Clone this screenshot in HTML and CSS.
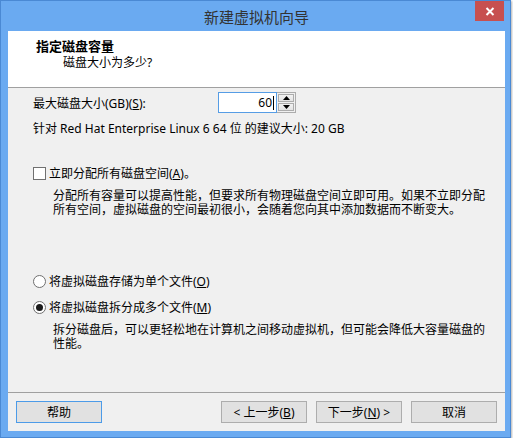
FILE: index.html
```html
<!DOCTYPE html>
<html lang="zh-CN">
<head>
    <meta charset="UTF-8">
    <title>新建虚拟机向导</title>
    <link rel="stylesheet" href="styles.css">
</head>
<body>
    <div class="window">
        <div class="titlebar">
            <span class="title">新建虚拟机向导</span>
            <button class="close" title="关闭">
                <svg width="10" height="9" viewBox="0 0 10 9">
                    <path d="M1.5 1 L8.5 8 M8.5 1 L1.5 8" stroke="#fff" stroke-width="2" fill="none"/>
                </svg>
            </button>
        </div>

        <div class="client">
            <div class="header">
                <div class="header-title">指定磁盘容量</div>
                <div class="header-sub">磁盘大小为多少?</div>
            </div>

            <div class="content">
                <div class="size-row">
                    <label>最大磁盘大小(GB)(<u>S</u>):</label>
                    <div class="spin">
                        <div class="spin-input">60<span class="caret"></span></div>
                        <div class="spin-buttons">
                            <span class="spin-btn">
                                <svg width="7" height="4" viewBox="0 0 7 4"><path d="M0 4 L3.5 0 L7 4 Z" fill="#000"/></svg>
                            </span>
                            <span class="spin-btn">
                                <svg width="7" height="4" viewBox="0 0 7 4"><path d="M0 0 L3.5 4 L7 0 Z" fill="#000"/></svg>
                            </span>
                        </div>
                    </div>
                </div>

                <p class="recommend">针对 Red Hat Enterprise Linux 6 64 位 的建议大小: 20 GB</p>

                <div class="option check-row">
                    <span class="checkbox"></span>立即分配所有磁盘空间(<u>A</u>)。
                </div>
                <p class="desc">分配所有容量可以提高性能，但要求所有物理磁盘空间立即可用。如果不立即分配所有空间，虚拟磁盘的空间最初很小，会随着您向其中添加数据而不断变大。</p>

                <div class="option radio-one">
                    <span class="radio"></span>将虚拟磁盘存储为单个文件(<u>O</u>)
                </div>
                <div class="option radio-two">
                    <span class="radio checked"></span>将虚拟磁盘拆分成多个文件(<u>M</u>)
                </div>
                <p class="desc">拆分磁盘后，可以更轻松地在计算机之间移动虚拟机，但可能会降低大容量磁盘的性能。</p>
            </div>

            <div class="footer">
                <button class="btn default">帮助</button>
                <div class="nav">
                    <button class="btn">&lt; 上一步(<u>B</u>)</button>
                    <button class="btn">下一步(<u>N</u>) &gt;</button>
                    <button class="btn">取消</button>
                </div>
            </div>
        </div>
    </div>
</body>
</html>
```

FILE: styles.css
```css
body {
    margin: 0;
    background: #fff;
    font-family: "Noto Sans", "Noto Sans CJK SC", sans-serif;
    font-size: 12px;
    color: #000;
}

.window {
    position: relative;
    width: 511px;
    height: 438px;
    box-sizing: border-box;
    display: flex;
    flex-direction: column;
    padding: 0 5px 6px 7px;
    background: #6aaaf1;
    border: 1px solid #4a89d4;
    box-shadow: 1px 1px 2px rgba(0, 0, 0, 0.3);
}

.titlebar {
    height: 30px;
    display: flex;
    align-items: center;
    justify-content: center;
}

.title {
    font-size: 15px;
    color: #333;
}

.close {
    position: absolute;
    top: 0;
    right: 6px;
    width: 29px;
    height: 20px;
    padding: 0;
    border: none;
    background: #c75050;
    display: flex;
    align-items: center;
    justify-content: center;
}

.client {
    height: 400px;
    display: flex;
    flex-direction: column;
    background: #f0f0f0;
}

.header {
    height: 57px;
    box-sizing: border-box;
    padding: 7px 0 0 28px;
    background: #fff;
    border-bottom: 1px solid #a0a0a0;
}

.header-title {
    font-size: 13px;
    font-weight: bold;
    line-height: 16px;
}

.header-sub {
    margin-top: 1px;
    padding-left: 27px;
    line-height: 16px;
}

.content {
    padding: 4px 0 0 25px;
}

.size-row {
    display: grid;
    grid-template-columns: 185px auto;
    align-items: center;
    height: 21px;
}

.spin {
    display: flex;
}

.spin-input {
    width: 59px;
    height: 21px;
    box-sizing: border-box;
    padding-right: 2px;
    border: 1px solid #569de5;
    background: #fff;
    text-align: right;
    line-height: 19px;
}

.caret {
    display: inline-block;
    width: 1px;
    height: 14px;
    margin-left: 1px;
    background: #000;
    vertical-align: -3px;
}

.spin-buttons {
    width: 19px;
    height: 21px;
    box-sizing: border-box;
    padding: 1px;
    display: flex;
    flex-direction: column;
    gap: 1px;
    border: 1px solid #acacac;
    border-left: none;
    background: #f0f0f0;
}

.spin-btn {
    flex: 1;
    display: flex;
    align-items: center;
    justify-content: center;
    border: 1px solid #acacac;
    background: linear-gradient(#f2f2f2, #e3e3e3);
}

.recommend {
    margin: 9px 0 0;
    line-height: 14px;
}

.option {
    display: flex;
    align-items: center;
    height: 14px;
}

.check-row {
    margin-top: 30px;
}

.checkbox {
    width: 13px;
    height: 13px;
    box-sizing: border-box;
    margin-right: 3px;
    border: 1px solid #707070;
    background: #fff;
}

.radio {
    width: 13px;
    height: 13px;
    box-sizing: border-box;
    margin-right: 3px;
    border: 1px solid #707070;
    border-radius: 50%;
    background: #fff;
    display: flex;
    align-items: center;
    justify-content: center;
}

.radio.checked::after {
    content: "";
    width: 7px;
    height: 7px;
    border-radius: 50%;
    background: #1a1a1a;
}

.radio-one {
    margin-top: 57px;
}

.radio-two {
    margin-top: 12px;
}

.desc {
    width: 436px;
    margin: 9px 0 0 20px;
    line-height: 14px;
}

.footer {
    margin-top: auto;
    display: flex;
    justify-content: space-between;
    padding: 8px;
    border-top: 1px solid #a0a0a0;
}

.nav {
    display: flex;
    gap: 9px;
}

.btn {
    width: 86px;
    height: 22px;
    box-sizing: border-box;
    padding: 0;
    border: 1px solid #adadad;
    background: #e1e1e1;
    font-family: inherit;
    font-size: 12px;
    color: #000;
}

.btn.default {
    border-color: #4c9be8;
}
```
